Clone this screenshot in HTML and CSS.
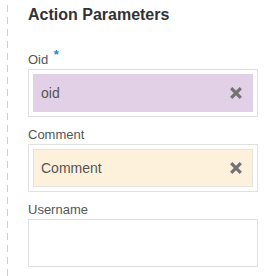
FILE: index.html
```html
<!DOCTYPE html>
<html lang="en">
<head>
  <meta charset="UTF-8" />
  <title>Action Parameters</title>
  <link rel="stylesheet" href="styles.css">
</head>
<body>

<div class="panel">
  <h2>Action Parameters</h2>

  <!-- Oid (obligatoire) -->
  <div class="field">
    <label>Oid <span class="req">*</span></label>
    <div class="box">
      <div class="value purple">
        <span>oid</span>
        <svg class="clear" width="12" height="12" viewBox="0 0 12 12"><path d="M1.2 1.2 L10.8 10.8 M10.8 1.2 L1.2 10.8" /></svg>
      </div>
    </div>
  </div>

  <div class="field">
    <label>Comment</label>
    <div class="box">
      <div class="value yellow">
        <span>Comment</span>
        <svg class="clear" width="12" height="12" viewBox="0 0 12 12"><path d="M1.2 1.2 L10.8 10.8 M10.8 1.2 L1.2 10.8" /></svg>
      </div>
    </div>
  </div>

  <div class="field">
    <label>Username</label>
    <div class="box"></div>
  </div>
</div>

</body>
</html>
```

FILE: styles.css
```css
html, body {
  margin: 0;
  padding: 0;
  background: white;
  font-family: 'Liberation Sans', Arial, sans-serif;
}

/* ligne pointillée à gauche */
.panel {
  margin-left: 7px;
  padding: 0 15px 0 21px;
  min-height: 276px;
  background-image: linear-gradient(to bottom, #cfcfcf 7px, transparent 7px);
  background-size: 1px 12px;
  background-repeat: repeat-y;
  background-position: 0 5px;
}

h2 {
  margin: 0;
  padding-top: 5px;
  font-size: 16px;
  line-height: 20px;
  color: #333;
  height: 47px;
}

.field {
  margin-bottom: 10px;
}

label {
  display: block;
  font-size: 13px;
  line-height: 15px;
  color: #555;
  margin-bottom: 2px;
}

.req {
  color: #1a87d9;
  font-weight: bold;
  position: relative;
  top: -5px;
  margin-left: 2px;
}

.box {
  border: 1px solid #dde1e3;
  padding: 4px;
  box-sizing: border-box;
  height: 48px;
}

.value {
  display: flex;
  align-items: center;
  justify-content: space-between;
  height: 100%;
  box-sizing: border-box;
  padding: 0 11px 0 8px;
  font-size: 14px;
  color: #555;
}

.purple {
  background: #e1d0e6;
}

.yellow {
  background: #fdf1dc;
  border: 1px solid #e3e3e0;
  padding-left: 7px;
  padding-right: 10px;
}

.clear {
  stroke: #737373;
  stroke-width: 3.2;
  fill: none;
}
```
